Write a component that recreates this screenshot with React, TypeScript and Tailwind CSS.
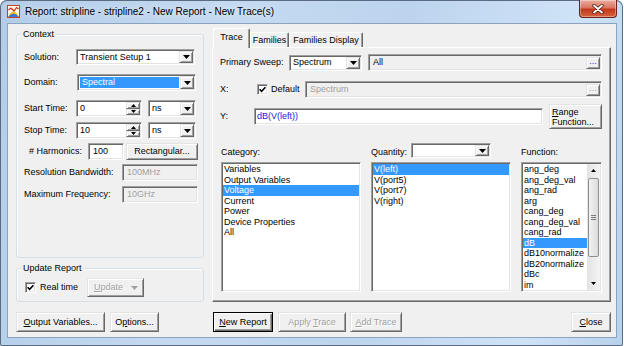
import React from "react";

// classic win32 3D frames
const raised =
  "border border-t-[#e3e3e3] border-l-[#e3e3e3] border-r-[#696969] border-b-[#696969] shadow-[inset_1px_1px_0_#ffffff,inset_-1px_-1px_0_#a0a0a0] bg-[#f0f0f0]";
const sunken =
  "border border-t-[#a0a0a0] border-l-[#a0a0a0] border-r-white border-b-white shadow-[inset_1px_1px_0_#696969,inset_-1px_-1px_0_#e3e3e3] p-px";
const dimText = "text-[#a0a0a0] [text-shadow:1px_1px_0_#ffffff]";

function Arrow({ up = false, small = false, dim = false }: { up?: boolean; small?: boolean; dim?: boolean }) {
  const w = small ? 5 : 7;
  const h = small ? 3 : 4;
  return (
    <svg width={w} height={h} viewBox={`0 0 ${w} ${h}`} className="shrink-0">
      <polygon
        points={up ? `0,${h} ${w},${h} ${w / 2},0` : `0,0 ${w},0 ${w / 2},${h}`}
        fill={dim ? "#a0a0a0" : "#000000"}
      />
    </svg>
  );
}

function Combo({ value = "", className = "", selected = false }: { value?: string; className?: string; selected?: boolean }) {
  return (
    <div className={`flex bg-white ${sunken} ${className}`}>
      <div
        className={`flex min-w-0 flex-1 items-center whitespace-nowrap pl-[2px] ${
          selected ? "m-px bg-[#3399ff] text-white" : ""
        }`}
      >
        {value}
      </div>
      <div className={`flex w-[14px] shrink-0 items-center justify-center ${raised}`}>
        <Arrow />
      </div>
    </div>
  );
}

function Field({
  value = "",
  className = "",
  disabled = false,
  textClass = "",
}: {
  value?: string;
  className?: string;
  disabled?: boolean;
  textClass?: string;
}) {
  return (
    <div className={`flex items-center ${sunken} ${disabled ? "bg-[#f0f0f0]" : "bg-white"} ${className}`}>
      <span className={`whitespace-nowrap pl-[2px] ${disabled ? "text-[#a0a0a0]" : ""} ${textClass}`}>{value}</span>
    </div>
  );
}

function Spin({ value }: { value: string }) {
  return (
    <div className={`flex h-[17px] w-[66px] bg-white ${sunken}`}>
      <div className="flex flex-1 items-center pl-[2px]">{value}</div>
      <div className="flex w-[14px] flex-col">
        <div className={`flex flex-1 items-center justify-center ${raised}`}>
          <Arrow up small />
        </div>
        <div className={`flex flex-1 items-center justify-center ${raised}`}>
          <Arrow small />
        </div>
      </div>
    </div>
  );
}

function Btn({
  children,
  className = "",
  disabled = false,
  isDefault = false,
}: {
  children: React.ReactNode;
  className?: string;
  disabled?: boolean;
  isDefault?: boolean;
}) {
  const frame = isDefault
    ? "border border-black bg-[#f0f0f0] shadow-[inset_1px_1px_0_#ffffff,inset_-1px_-1px_0_#696969,inset_-2px_-2px_0_#a0a0a0]"
    : raised;
  return (
    <button type="button" className={`flex items-center justify-center whitespace-nowrap ${frame} ${disabled ? dimText : ""} ${className}`}>
      {children}
    </button>
  );
}

function Check() {
  return (
    <div className="flex h-[11px] w-[11px] shrink-0 items-center justify-center border border-t-[#a0a0a0] border-l-[#a0a0a0] border-r-white border-b-white bg-white shadow-[inset_1px_1px_0_#696969,inset_-1px_-1px_0_#e3e3e3]">
      <svg width="7" height="7" viewBox="0 0 7 7">
        <path d="M0.6 3.2 L2.6 5.3 L6.4 1.2" stroke="#000" strokeWidth="1.6" fill="none" />
      </svg>
    </div>
  );
}

function Group({ title, className, children }: { title: string; className: string; children: React.ReactNode }) {
  return (
    <div className={`relative rounded-[3px] border border-[#d5dfe5] shadow-[inset_1px_1px_0_#ffffff] ${className}`}>
      <span className="absolute -top-[6px] left-[4px] bg-[#f0f0f0] px-[2px]">{title}</span>
      {children}
    </div>
  );
}

function ListBox({ items, active, className }: { items: string[]; active: number; className: string }) {
  return (
    <div className={`h-[130px] overflow-hidden bg-white ${sunken} ${className}`}>
      {items.map((t, i) => (
        <div key={t} className={`h-[10.5px] whitespace-nowrap pl-px leading-[10.5px] ${i === active ? "bg-[#3399ff] text-white" : ""}`}>
          {t}
        </div>
      ))}
    </div>
  );
}

const categories = ["Variables", "Output Variables", "Voltage", "Current", "Power", "Device Properties", "All"];
const quantities = ["V(left)", "V(port5)", "V(port7)", "V(right)"];
const functions = [
  "ang_deg",
  "ang_deg_val",
  "ang_rad",
  "arg",
  "cang_deg",
  "cang_deg_val",
  "cang_rad",
  "dB",
  "dB10normalize",
  "dB20normalize",
  "dBc",
  "im",
];

function TitleBar() {
  return (
    <div className="flex h-[23px] items-start">
      <svg width="13" height="13" viewBox="0 0 13 13" className="mt-[5px] shrink-0">
        <rect x="0.5" y="0.5" width="12" height="12" fill="#fffbe8" stroke="#c8402a" />
        <path d="M1 12 Q6.5 1 12 12 Z" fill="#f3c21b" />
        <path d="M1 12 Q6.5 5 12 12 Z" fill="#3a74d4" />
        <path d="M1.5 5 L4 3 L7 6 L9.5 2.5 L11.5 4" stroke="#d42a1e" strokeWidth="1.2" fill="none" />
      </svg>
      <span className="ml-[5px] mt-[5px] text-[10px] leading-[13px] text-black [text-shadow:0_0_6px_#ffffff]">
        Report: stripline - stripline2 - New Report - New Trace(s)
      </span>
      <div className="ml-auto flex h-[18px] w-[38px] items-center justify-center rounded-b-[4px] border border-t-0 border-[#6b2316] bg-[linear-gradient(#ecae9f,#db7560_45%,#c4381d_55%,#d7633f)] shadow-[inset_0_0_0_1px_rgba(255,255,255,0.35)]">
        <svg width="12" height="10" viewBox="0 0 12 10">
          <path d="M2 1.5 L10 8.5 M10 1.5 L2 8.5" stroke="#4d1a10" strokeWidth="3.4" strokeLinecap="round" />
          <path d="M2 1.5 L10 8.5 M10 1.5 L2 8.5" stroke="#ffffff" strokeWidth="1.8" strokeLinecap="round" />
        </svg>
      </div>
    </div>
  );
}

function ContextGroup() {
  return (
    <Group title="Context" className="h-[224px] pl-[7px] pt-[14px]">
      <div className="flex h-[16px] items-center">
        <span className="w-[52px] shrink-0">Solution:</span>
        <Combo value="Transient Setup 1" className="h-[16px] w-[119px]" />
      </div>
      <div className="mt-[9px] flex h-[17px] items-center">
        <span className="w-[53px] shrink-0">Domain:</span>
        <Combo value="Spectral" selected className="h-[17px] w-[119px]" />
      </div>
      <div className="mt-[9px] flex h-[17px] items-center">
        <span className="w-[52px] shrink-0">Start Time:</span>
        <Spin value="0" />
        <Combo value="ns" className="ml-[6px] h-[17px] w-[48px]" />
      </div>
      <div className="mt-[5px] flex h-[17px] items-center">
        <span className="w-[52px] shrink-0">Stop Time:</span>
        <Spin value="10" />
        <Combo value="ns" className="ml-[6px] h-[17px] w-[48px]" />
      </div>
      <div className="mt-[4px] flex h-[17px] items-center pl-[5px]">
        <span className="w-[59px] shrink-0"># Harmonics:</span>
        <Field value="100" className="h-[17px] w-[36px]" textClass="pl-[3px]" />
        <Btn className="ml-[2px] h-[17px] w-[72px]">Rectangular...</Btn>
      </div>
      <div className="mt-[4px] flex h-[17px] items-center">
        <span className="w-[98px] shrink-0">Resolution Bandwidth:</span>
        <Field value="100MHz" disabled className="h-[17px] w-[76px]" textClass="pl-[3px]" />
      </div>
      <div className="mt-[5px] flex h-[17px] items-center">
        <span className="w-[98px] shrink-0">Maximum Frequency:</span>
        <Field value="10GHz" disabled className="h-[17px] w-[76px]" textClass="pl-[3px]" />
      </div>
    </Group>
  );
}

function UpdateGroup() {
  return (
    <Group title="Update Report" className="mt-[10px] h-[34px] pl-[8px] pt-[9px]">
      <div className="flex h-[19px] items-center">
        <Check />
        <span className="ml-[4px]">Real time</span>
        <Btn disabled className="ml-[9px] h-[19px] w-[57px] !justify-start pl-[6px]">
          <span>
            <span className="underline">U</span>pdate
          </span>
          <span className="ml-auto mr-[5px] flex">
            <Arrow dim />
          </span>
        </Btn>
      </div>
    </Group>
  );
}

function TracePanel() {
  return (
    <div className="flex h-[255px] flex-col border border-t-white border-l-white border-r-[#696969] border-b-[#696969] pl-[7px] pr-[8px] pt-[6px] shadow-[inset_-1px_-1px_0_#a0a0a0]">
      <div className="flex h-[17px] items-center">
        <span className="w-[69px] shrink-0">Primary Sweep:</span>
        <Combo value="Spectrum" className="h-[16px] w-[73px]" />
        <div className={`ml-[6px] flex h-[17px] flex-1 items-center bg-[#f0f0f0] ${sunken}`}>
          <span className="pl-[3px]">All</span>
          <div className={`ml-auto flex h-[12px] w-[14px] items-start justify-center leading-[7px] text-[#2b2bd6] ${raised}`}>
            ...
          </div>
        </div>
      </div>
      <div className="mt-[10px] flex h-[17px] items-center">
        <span className="w-[37px] shrink-0">X:</span>
        <Check />
        <span className="ml-[3px]">Default</span>
        <div className={`ml-auto flex h-[17px] w-[297px] items-center bg-[#f0f0f0] ${sunken}`}>
          <span className="pl-[3px] text-[#a0a0a0]">Spectrum</span>
          <div className={`ml-auto flex h-[12px] w-[14px] items-start justify-center leading-[7px] ${dimText} ${raised}`}>
            ...
          </div>
        </div>
      </div>
      <div className="mt-[6px] flex h-[25px] items-center">
        <span className="w-[34px] shrink-0">Y:</span>
        <Field value="dB(V(left))" className="h-[17px] w-[289px]" textClass="!pl-px text-[#2020e0]" />
        <Btn className="ml-auto h-[25px] w-[53px] !items-start !justify-start pl-[2px] pt-[2px] text-left leading-[10px]">
          <span>
            <span className="underline">R</span>ange
            <br />
            Function...
          </span>
        </Btn>
      </div>
      <div className="mt-[14px] flex pl-px">
        <div className="flex w-[140px] flex-col">
          <div className="flex h-[15px] items-end">Category:</div>
          <ListBox items={categories} active={2} className="mt-[4px]" />
        </div>
        <div className="ml-[10px] flex w-[140px] flex-col">
          <div className="flex h-[15px] items-end">
            <span className="w-[40px]">Quantity:</span>
            <Combo className="h-[15px] w-[80px]" />
          </div>
          <ListBox items={quantities} active={0} className="mt-[4px]" />
        </div>
        <div className="ml-[10px] flex w-[81px] flex-col">
          <div className="flex h-[15px] items-end">Function:</div>
          <div className={`mt-[4px] flex h-[130px] bg-white ${sunken}`}>
            <div className="min-w-0 flex-1 overflow-hidden">
              {functions.map((t, i) => (
                <div
                  key={t}
                  className={`h-[10.5px] whitespace-nowrap pl-px leading-[10.5px] ${i === 7 ? "bg-[#3399ff] text-white" : ""}`}
                >
                  {t}
                </div>
              ))}
            </div>
            <div className="flex w-[13px] shrink-0 flex-col bg-[linear-gradient(90deg,#e3e3e3,#f4f4f4)]">
              <div className="flex h-[13px] items-center justify-center">
                <Arrow up small />
              </div>
              <div className="mx-[1px] mt-[1px] flex h-[79px] flex-col items-center justify-center gap-[1px] rounded-[2px] border border-[#8f8f8f] bg-[linear-gradient(90deg,#f2f2f2,#dcdcdc)]">
                <div className="h-px w-[5px] bg-[#7a7a7a]" />
                <div className="h-px w-[5px] bg-[#7a7a7a]" />
                <div className="h-px w-[5px] bg-[#7a7a7a]" />
              </div>
              <div className="mt-auto flex h-[13px] items-center justify-center">
                <Arrow small />
              </div>
            </div>
          </div>
        </div>
      </div>
    </div>
  );
}

export default function App() {
  return (
    <div className="h-[346px] w-[624px] bg-white font-['Liberation_Sans',Arial,sans-serif] text-[9px] leading-[11px] text-black">
      <div className="flex h-[346px] w-[623px] flex-col rounded-t-[7px] rounded-b-[2px] bg-[linear-gradient(100deg,#b3cde9_0%,#c4daf1_35%,#bcd4ee_60%,#cfe3f7_85%,#b8d1ec_100%)] pb-[8px] pl-[7px] pr-[6px] shadow-[inset_0_0_0_1px_#5a6b82]">
        <TitleBar />
        <div className="flex h-[315px] border border-[#8ca3c0] bg-[#f0f0f0]">
          {/* left column */}
          <div className="ml-[8px] mt-[10px] flex w-[188px] flex-col">
            <ContextGroup />
            <UpdateGroup />
            <div className="mt-[10px] flex gap-[5px]">
              <Btn className="h-[20px] w-[89px]">
                <span>
                  <span className="underline">O</span>utput Variables...
                </span>
              </Btn>
              <Btn className="h-[20px] w-[49px]">
                <span>
                  O<span className="underline">p</span>tions...
                </span>
              </Btn>
            </div>
          </div>

          {/* right column */}
          <div className="ml-[8px] mt-[4px] flex w-[399px] flex-col">
            <div className="flex h-[19px] items-end">
              <div className="relative z-10 -mb-px ml-px flex h-[20px] w-[37px] items-start justify-center rounded-t-[2px] border border-b-0 border-t-white border-l-white border-r-[#696969] bg-[#f0f0f0] pt-[3px] shadow-[inset_-1px_0_0_#a0a0a0]">
                Trace
              </div>
              <div className="flex h-[15px] w-[39px] items-start justify-center rounded-t-[2px] border border-b-0 border-t-white border-l-white border-r-[#696969] pt-[2px] shadow-[inset_-1px_0_0_#a0a0a0]">
                Families
              </div>
              <div className="flex h-[15px] w-[74px] items-start justify-center rounded-t-[2px] border border-b-0 border-t-white border-l-white border-r-[#696969] pt-[2px] shadow-[inset_-1px_0_0_#a0a0a0]">
                Families Display
              </div>
            </div>
            <TracePanel />
            <div className="mt-[10px] flex">
              <Btn isDefault className="ml-px h-[20px] w-[60px]">
                <span>
                  <span className="underline">N</span>ew Report
                </span>
              </Btn>
              <Btn disabled className="ml-[5px] h-[20px] w-[68px]">
                <span>
                  Apply <span className="underline">T</span>race
                </span>
              </Btn>
              <Btn disabled className="ml-[4px] h-[20px] w-[52px]">
                <span>
                  <span className="underline">A</span>dd Trace
                </span>
              </Btn>
              <Btn className="ml-auto h-[20px] w-[40px]">
                <span>
                  <span className="underline">C</span>lose
                </span>
              </Btn>
            </div>
          </div>
        </div>
      </div>
    </div>
  );
}
